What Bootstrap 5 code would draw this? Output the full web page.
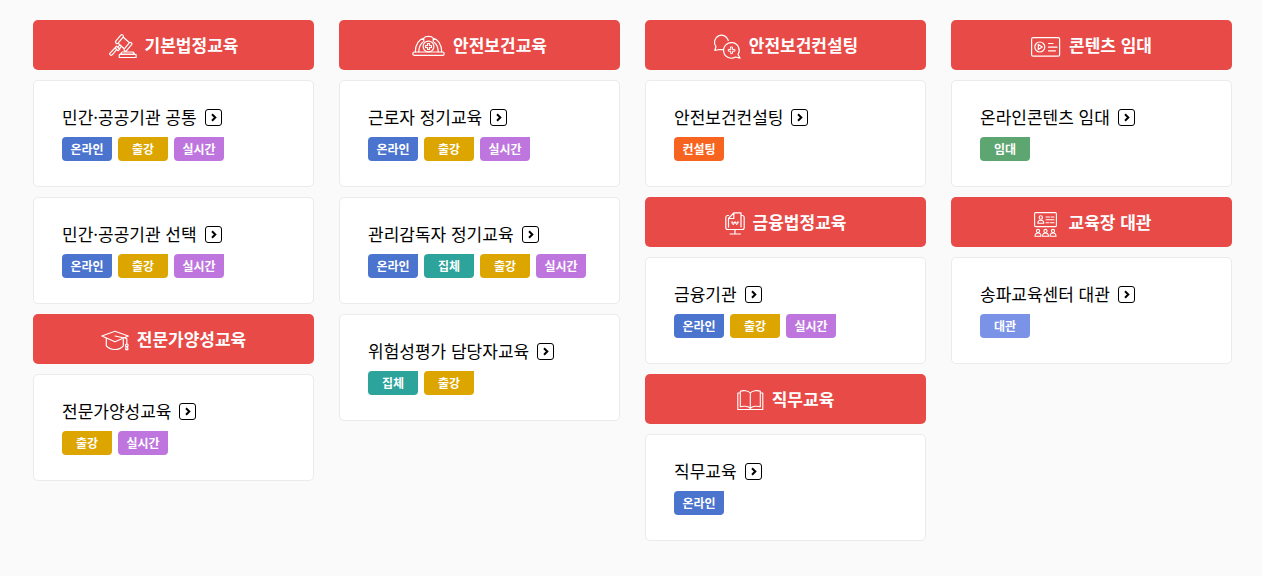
<!DOCTYPE html>
<html lang="ko">
<head>
<meta charset="utf-8">
<meta name="viewport" content="width=device-width, initial-scale=1">
<title>교육 안내</title>
<link href="https://cdn.jsdelivr.net/npm/bootstrap@5.3.0/dist/css/bootstrap.min.css" rel="stylesheet">
<style>
  body { background: #fafafa; font-family: "Noto Sans CJK KR", "Noto Sans", sans-serif; color: #000; }
  .course-page { padding: 20px 30px 35px 33px; }
  .course-grid { --bs-gutter-x: 25px; --bs-gutter-y: 10px; margin-top: 0; }
  .course-grid > * { margin-top: 0; }
  .stack { gap: 10px; }
  .group-head { height: 50px; gap: 8px; background: #e84a47; color: #fff; border-radius: 5px; font-size: 17px; line-height: 26px; font-weight: 700; }
  .group-head svg { height: 30px; flex: none; fill: none; stroke: #fff; stroke-width: 1.2; stroke-linecap: round; stroke-linejoin: round; }
  .course { padding: 23px 28px 25px; background: #fff; border: 1px solid #ebebeb; border-radius: 5px; }
  .course-title { gap: 8px; margin-bottom: 7px; font-size: 17px; line-height: 26px; font-weight: 400; }
  .course-title svg { width: 17px; height: 17px; flex: none; fill: none; stroke: #000; }
  .tags { gap: 6px; }
  .tag { width: 50px; height: 24px; border-radius: 4px 0 4px 4px; color: #fff; font-size: 12px; line-height: 24px; font-weight: 700; text-align: center; }
  .tag-online { background: #4a74ce; }
  .tag-visit { background: #dca500; }
  .tag-live { background: #be76de; }
  .tag-group { background: #2ca39b; }
  .tag-consult { background: #f76420; }
  .tag-rent { background: #5ea671; }
  .tag-room { background: #7b93e6; }
</style>
</head>
<body>
<svg class="d-none" aria-hidden="true">
  <symbol id="go" viewBox="0 0 17 17"><rect x=".5" y=".5" width="16" height="16" rx="2.5"/><path d="M7 5.3l3.3 3.2L7 11.7" stroke-width="2"/></symbol>
</svg>
<main class="container-fluid course-page">
  <div class="row row-cols-1 row-cols-sm-2 row-cols-lg-4 course-grid">

    <div class="col d-flex flex-column stack">
      <h2 class="group-head d-flex align-items-center justify-content-center m-0">
        <svg width="28" viewBox="0 0 28 30" aria-hidden="true"><path d="M6.800 11.200l5-6a1.500 1.500 0 0 1 2.300 1.900l-5 6a1.500 1.500 0 0 1-2.300-1.900zM15.300 18.800l5-6a1.500 1.500 0 0 1 2.300 1.900l-5 6a1.500 1.500 0 0 1-2.300-1.900zM14.300 7.200l6.200 5.500M9.200 13.200l6 5.500M10.800 14.800l-1.500 1.800M12.500 16.200L11 18M7.500 16.200l3.200 2.800-1.500 1.700L6 18zM6 18L1 23.200c-.9 1.200.9 2.800 2.200 1.600l4.500-5.200M11.500 24.200l1.500-2.200h11l1.800 2.200zM10.300 24.500h16.800v3H10.300z"/></svg>
        기본법정교육
      </h2>
      <section class="course">
        <h3 class="m-0"><a href="#" class="course-title d-flex align-items-center text-reset text-decoration-none">민간·공공기관 공통<svg aria-hidden="true"><use href="#go"/></svg></a></h3>
        <div class="tags d-flex flex-wrap"><span class="tag tag-online">온라인</span><span class="tag tag-visit">출강</span><span class="tag tag-live">실시간</span></div>
      </section>
      <section class="course">
        <h3 class="m-0"><a href="#" class="course-title d-flex align-items-center text-reset text-decoration-none">민간·공공기관 선택<svg aria-hidden="true"><use href="#go"/></svg></a></h3>
        <div class="tags d-flex flex-wrap"><span class="tag tag-online">온라인</span><span class="tag tag-visit">출강</span><span class="tag tag-live">실시간</span></div>
      </section>
      <h2 class="group-head d-flex align-items-center justify-content-center m-0">
        <svg width="28" viewBox="0 0 28 30" aria-hidden="true"><path d="M14 7.300L27.300 12 14 17.800.8 12zM5.300 14.300v7.500C10 26.700 18 26.700 22.300 21.800v-6.500M14 12l11.800 2.500v5.500"/><circle cx="25.800" cy="21.300" r="1.300"/><path d="M25.100 22.600l-.4 3h2.200l-.4-3"/></svg>
        전문가양성교육
      </h2>
      <section class="course">
        <h3 class="m-0"><a href="#" class="course-title d-flex align-items-center text-reset text-decoration-none">전문가양성교육<svg aria-hidden="true"><use href="#go"/></svg></a></h3>
        <div class="tags d-flex flex-wrap"><span class="tag tag-visit">출강</span><span class="tag tag-live">실시간</span></div>
      </section>
    </div>

    <div class="col d-flex flex-column stack">
      <h2 class="group-head d-flex align-items-center justify-content-center m-0">
        <svg width="33" viewBox="0 0 33 30" aria-hidden="true"><rect x=".8" y="22" width="31.400" height="3.400" rx="1.700"/><path d="M3.300 22C3.300 14 7.500 9 12 8.200M29.700 22C29.700 14 25.500 9 21 8.200M11.800 12V8c1.500-2.200 7.900-2.200 9.400 0v4M6.800 22c0-4.500 1.400-7.500 3.700-9.500M26.200 22c0-4.500-1.400-7.500-3.700-9.500"/><circle cx="16.500" cy="16.500" r="5.400"/><path d="M15.500 13.500h2v2h2v2h-2v2h-2v-2h-2v-2h2z"/></svg>
        안전보건교육
      </h2>
      <section class="course">
        <h3 class="m-0"><a href="#" class="course-title d-flex align-items-center text-reset text-decoration-none">근로자 정기교육<svg aria-hidden="true"><use href="#go"/></svg></a></h3>
        <div class="tags d-flex flex-wrap"><span class="tag tag-online">온라인</span><span class="tag tag-visit">출강</span><span class="tag tag-live">실시간</span></div>
      </section>
      <section class="course">
        <h3 class="m-0"><a href="#" class="course-title d-flex align-items-center text-reset text-decoration-none">관리감독자 정기교육<svg aria-hidden="true"><use href="#go"/></svg></a></h3>
        <div class="tags d-flex flex-wrap"><span class="tag tag-online">온라인</span><span class="tag tag-group">집체</span><span class="tag tag-visit">출강</span><span class="tag tag-live">실시간</span></div>
      </section>
      <section class="course">
        <h3 class="m-0"><a href="#" class="course-title d-flex align-items-center text-reset text-decoration-none">위험성평가 담당자교육<svg aria-hidden="true"><use href="#go"/></svg></a></h3>
        <div class="tags d-flex flex-wrap"><span class="tag tag-group">집체</span><span class="tag tag-visit">출강</span></div>
      </section>
    </div>

    <div class="col d-flex flex-column stack">
      <h2 class="group-head d-flex align-items-center justify-content-center m-0">
        <svg width="28" viewBox="-1 0 28 30" aria-hidden="true"><path d="M14.300 10.500A7 7 0 1 0 2 16.500L.8 20.500l4.500-1 4 .2M24 24.500A7.800 7.800 0 1 0 21.500 27l4.700 1.200z"/><path d="M16.700 17h1.800v2.400h2.400v1.800h-2.400v2.400h-1.800v-2.400h-2.400v-1.800h2.400z" stroke-width="1"/></svg>
        안전보건컨설팅
      </h2>
      <section class="course">
        <h3 class="m-0"><a href="#" class="course-title d-flex align-items-center text-reset text-decoration-none">안전보건컨설팅<svg aria-hidden="true"><use href="#go"/></svg></a></h3>
        <div class="tags d-flex flex-wrap"><span class="tag tag-consult">컨설팅</span></div>
      </section>
      <h2 class="group-head d-flex align-items-center justify-content-center m-0">
        <svg width="20" viewBox="0 0 20 30" aria-hidden="true"><path d="M3.500 8.500H2.800a2 2 0 0 0-2 2v10a2 2 0 0 0 2 2h14.400a2 2 0 0 0 2-2v-10a2 2 0 0 0-2-2h-.7M10 22.500v4.300M5 27h10.500M3.500 20v-8.500l5.300-5.700h7.200V20M8.800 5.800v5.700H3.500"/><path d="M7 14.300l1.300 3.700L10 14.500l1.700 3.500 1.300-3.700M6.300 15.800h7.400" stroke-width=".9"/></svg>
        금융법정교육
      </h2>
      <section class="course">
        <h3 class="m-0"><a href="#" class="course-title d-flex align-items-center text-reset text-decoration-none">금융기관<svg aria-hidden="true"><use href="#go"/></svg></a></h3>
        <div class="tags d-flex flex-wrap"><span class="tag tag-online">온라인</span><span class="tag tag-visit">출강</span><span class="tag tag-live">실시간</span></div>
      </section>
      <h2 class="group-head d-flex align-items-center justify-content-center m-0">
        <svg width="27" viewBox="0 0 27 30" aria-hidden="true"><path d="M13.300 9C11.500 6.500 6 6 3.300 7.300v15.400C6 21.800 11.500 22 13.300 24.500 15 22 20.500 21.800 23.300 22.700V7.300C20.500 6 15 6.500 13.300 9zM13.300 9v15.500M3.300 9H.8v16.500h25V9h-2.500M10.500 25.500h5.500" stroke-width="1.100"/></svg>
        직무교육
      </h2>
      <section class="course">
        <h3 class="m-0"><a href="#" class="course-title d-flex align-items-center text-reset text-decoration-none">직무교육<svg aria-hidden="true"><use href="#go"/></svg></a></h3>
        <div class="tags d-flex flex-wrap"><span class="tag tag-online">온라인</span></div>
      </section>
    </div>

    <div class="col d-flex flex-column stack">
      <h2 class="group-head d-flex align-items-center justify-content-center m-0">
        <svg width="30" viewBox="0 0 30 30" aria-hidden="true"><rect x=".6" y="7.600" width="28" height="18.600" rx="1.500"/><circle cx="8.800" cy="17" r="5"/><path d="M7.300 14.500v5l4-2.500zM17.500 13.500h4.500M17.500 17.200h8.500M17.500 20.800h7"/></svg>
        콘텐츠 임대
      </h2>
      <section class="course">
        <h3 class="m-0"><a href="#" class="course-title d-flex align-items-center text-reset text-decoration-none">온라인콘텐츠 임대<svg aria-hidden="true"><use href="#go"/></svg></a></h3>
        <div class="tags d-flex flex-wrap"><span class="tag tag-rent">임대</span></div>
      </section>
      <h2 class="group-head d-flex align-items-center justify-content-center m-0">
        <svg width="29" viewBox="-1 0 29 30" aria-hidden="true"><g stroke-width="1.100"><rect x="1.600" y="5.600" width="21.800" height="14" rx="1"/><circle cx="7.800" cy="10.500" r="1.700"/><path d="M4.800 16.300c0-4 6-4 6 0zM13 10h3.500M18 10h3M13 12.800h8M13 15.800h3M17.500 15.800h3.500"/><circle cx="5" cy="24" r="1.600"/><circle cx="12.500" cy="24" r="1.600"/><circle cx="20" cy="24" r="1.600"/><path d="M2 29.300c0-4.500 6-4.500 6 0zM9.500 29.300c0-4.500 6-4.500 6 0zM17 29.300c0-4.500 6-4.500 6 0z"/></g></svg>
        교육장 대관
      </h2>
      <section class="course">
        <h3 class="m-0"><a href="#" class="course-title d-flex align-items-center text-reset text-decoration-none">송파교육센터 대관<svg aria-hidden="true"><use href="#go"/></svg></a></h3>
        <div class="tags d-flex flex-wrap"><span class="tag tag-room">대관</span></div>
      </section>
    </div>

  </div>
</main>
<script src="https://cdn.jsdelivr.net/npm/bootstrap@5.3.0/dist/js/bootstrap.bundle.min.js"></script>
</body>
</html>
